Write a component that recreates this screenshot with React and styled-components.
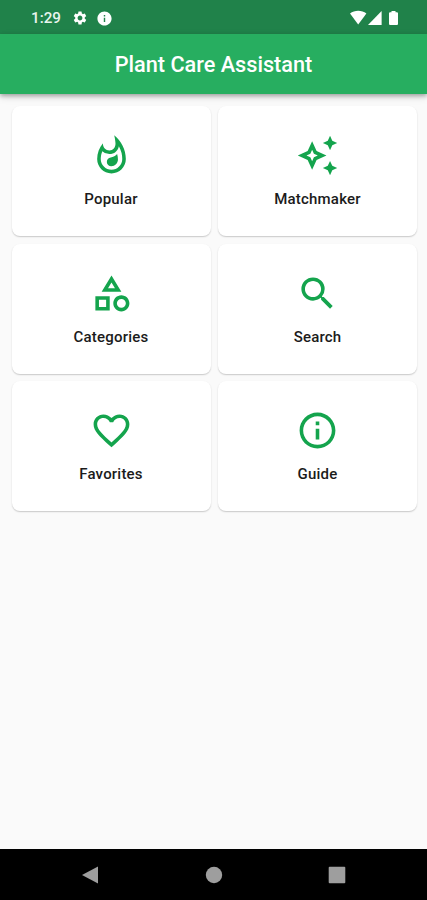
import styled, { createGlobalStyle } from "styled-components";
import {
  MdFavoriteBorder,
  MdInfo,
  MdInfoOutline,
  MdOutlineAutoAwesome,
  MdOutlineCategory,
  MdOutlineWhatshot,
  MdSearch,
  MdSettings,
} from "react-icons/md";

const menus = [
  { name: "Popular", icon: MdOutlineWhatshot },
  { name: "Matchmaker", icon: MdOutlineAutoAwesome },
  { name: "Categories", icon: MdOutlineCategory },
  { name: "Search", icon: MdSearch },
  { name: "Favorites", icon: MdFavoriteBorder },
  { name: "Guide", icon: MdInfoOutline },
];

export default function App() {
  return (
    <>
      <GlobalStyle />
      <Screen>
        <StatusBar>
          <Time>1:29</Time>
          <MdSettings size={16} />
          <InfoIcon size={17} />
          <Signals width="48" height="16" viewBox="0 0 48 16">
            <path d="M0 3.6C4.6-.2 11.8-.2 16.4 3.6L8.2 14.4z" />
            <path d="M18 15L31.6 1v14z" />
            <path d="M41.5 1h4v1.2h1.4q1.1 0 1.1 1.1v10.6q0 1.1-1.1 1.1h-6.8q-1.1 0-1.1-1.1V3.3q0-1.1 1.1-1.1h1.4z" />
          </Signals>
        </StatusBar>
        <AppBar>
          <Title>Plant Care Assistant</Title>
        </AppBar>
        <Grid>
          {menus.map(({ name, icon: Icon }) => (
            <Card key={name}>
              <Icon size={43} />
              <Label>{name}</Label>
            </Card>
          ))}
        </Grid>
        <NavBar>
          <NavIcon viewBox="0 0 18 18">
            <path d="M17 0.5V17.5L1 9z" />
          </NavIcon>
          <NavIcon viewBox="0 0 18 18">
            <circle cx="9" cy="9" r="8.2" />
          </NavIcon>
          <NavIcon viewBox="0 0 18 18">
            <rect x="0.7" y="0.7" width="16.6" height="16.6" rx="1" />
          </NavIcon>
        </NavBar>
      </Screen>
    </>
  );
}

const GlobalStyle = createGlobalStyle`
  * {
    box-sizing: border-box;
  }

  body {
    margin: 0;
    font-family: Roboto, "Liberation Sans", sans-serif;
  }
`;

const Screen = styled.div`
  display: flex;
  flex-direction: column;
  height: 100vh;
  background: #fafafa;
`;

const StatusBar = styled.div`
  display: flex;
  align-items: center;
  flex: none;
  height: 34px;
  padding: 2px 29.5px 0 31px;
  color: #fff;
  background: #20824a;
`;

const Time = styled.div`
  width: 41px;
  color: #e9f5ee;
  font-size: 15.2px;
  font-weight: 500;
`;

const InfoIcon = styled(MdInfo)`
  margin-left: 8px;
`;

const Signals = styled.svg`
  margin-left: auto;
  fill: currentColor;
`;

const AppBar = styled.header`
  display: flex;
  align-items: center;
  justify-content: center;
  flex: none;
  height: 60px;
  background: #27ae60;
  box-shadow: 0 2px 4px rgba(0, 0, 0, 0.28), 0 3px 8px rgba(0, 0, 0, 0.12);
  z-index: 1;
`;

const Title = styled.h1`
  margin: 0;
  color: #fff;
  font-size: 21.7px;
  font-weight: 500;
`;

const Grid = styled.main`
  display: grid;
  grid-template-columns: 1fr 1fr;
  grid-auto-rows: 130px;
  align-content: start;
  gap: 7.7px 7.5px;
  flex: 1;
  padding: 12px 10px 0 11.5px;
`;

const Card = styled.div`
  display: flex;
  flex-direction: column;
  align-items: center;
  padding-top: 28px;
  border-radius: 8px;
  color: #14a44d;
  background: #fff;
  box-shadow: 0 1px 1.5px rgba(0, 0, 0, 0.2);
`;

const Label = styled.div`
  margin-top: 13px;
  color: #1b1b1b;
  font-size: 15px;
  font-weight: 500;
  line-height: 18px;
  letter-spacing: 0.2px;
`;

const NavBar = styled.nav`
  display: flex;
  align-items: center;
  justify-content: space-between;
  flex: none;
  height: 51px;
  padding: 0 81px;
  background: #000;
`;

const NavIcon = styled.svg`
  width: 18px;
  height: 18px;
  fill: #9e9e9e;
`;
